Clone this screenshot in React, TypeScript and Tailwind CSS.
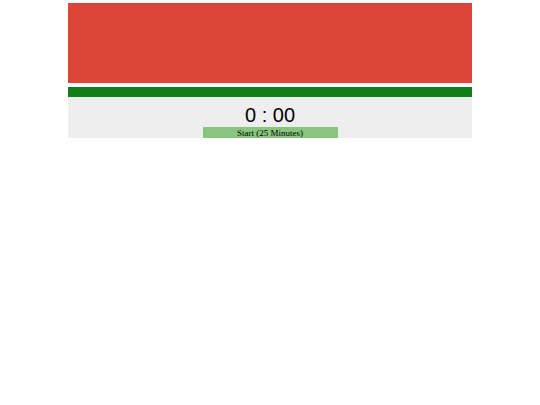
export default function App() {
  return (
    <div className="w-full bg-white" style={{ height: 405 }}>
      <div className="mx-auto w-[404px] pt-[3px]">
        <div className="h-[80px] bg-[#db4639]" />
        <div className="mt-[4px] h-[10px] bg-[#117f19]" />
        <div className="flex flex-col items-center bg-[#eeeeee]">
          <div
            className="h-[30px] whitespace-pre pt-[7px] text-[20px] leading-[23px] text-black"
            style={{ fontFamily: '"Liberation Sans", Arial, sans-serif' }}
          >
            <span>0</span> <span>:</span> <span>00</span>
          </div>
          <button
            className="flex h-[11px] w-[135px] items-center justify-center bg-[#88c57f] pt-[1px] text-[9px] leading-[10px] text-black"
            style={{ fontFamily: '"Liberation Serif", serif' }}
          >
            Start (25 Minutes)
          </button>
        </div>
      </div>
    </div>
  );
}
